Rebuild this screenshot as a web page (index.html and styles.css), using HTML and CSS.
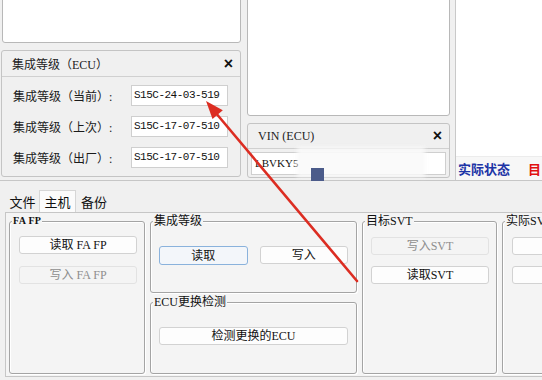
FILE: index.html
```html
<!DOCTYPE html>
<html lang="zh-CN">
<head>
<meta charset="utf-8">
<title>ECU</title>
<link rel="stylesheet" href="styles.css">
</head>
<body>
<div class="app">
  <div class="top">
    <div class="col col-left">
      <div class="pane pane-left"></div>
      <div class="panel ecu-panel">
        <div class="panel-head">
          <span class="title">集成等级（ECU）</span>
          <span class="close">×</span>
        </div>
        <div class="panel-body">
          <div class="row"><span class="lbl">集成等级（当前）:</span><span class="field">S15C-24-03-519</span></div>
          <div class="row"><span class="lbl">集成等级（上次）:</span><span class="field">S15C-17-07-510</span></div>
          <div class="row"><span class="lbl">集成等级（出厂）:</span><span class="field">S15C-17-07-510</span></div>
        </div>
      </div>
    </div>
    <div class="col col-mid">
      <div class="pane pane-mid"></div>
      <div class="panel vin-panel">
        <div class="panel-head vin-head">
          <span class="title vin-title">VIN (ECU)</span>
          <span class="close">×</span>
        </div>
        <div class="vin-body"><span class="field vin-field">LBVKY5</span></div>
      </div>
    </div>
    <div class="col col-right">
      <div class="pane pane-right"></div>
      <div class="status"><span class="st-blue">实际状态</span><span class="st-red">目</span></div>
    </div>
  </div>

  <div class="bottom">
    <div class="tabs">
      <span class="tab tab-1">文件</span>
      <span class="tab tab-2 active">主机</span>
      <span class="tab tab-3">备份</span>
    </div>
    <div class="tab-body">
      <div class="group g-fafp">
        <span class="legend legend-small">FA FP</span>
        <button class="btn">读取 FA FP</button>
        <button class="btn disabled">写入 FA FP</button>
      </div>
      <div class="col2">
        <div class="group g-level">
          <span class="legend">集成等级</span>
          <div class="btn-row">
            <button class="btn focus">读取</button>
            <button class="btn">写入</button>
          </div>
        </div>
        <div class="group g-ecu">
          <span class="legend">ECU更换检测</span>
          <button class="btn">检测更换的ECU</button>
        </div>
      </div>
      <div class="group g-svt">
        <span class="legend">目标SVT</span>
        <button class="btn disabled">写入SVT</button>
        <button class="btn">读取SVT</button>
      </div>
      <div class="group g-act">
        <span class="legend">实际SV</span>
        <button class="btn"></button>
        <button class="btn"></button>
      </div>
    </div>
  </div>

  <div class="redact"></div>
  <div class="bluesq"></div>
  <svg class="arrow" width="542" height="380" viewBox="0 0 542 380">
    <line x1="357" y1="281" x2="215" y2="112" stroke="#dc2d22" stroke-width="2.6" stroke-linecap="round"/>
    <polygon points="206,101 212.5,119 222.8,110.3" fill="#dc2d22"/>
  </svg>
</div>
</body>
</html>
```

FILE: styles.css
```css
* { box-sizing: border-box; }

body {
  margin: 0;
  width: 542px;
  height: 380px;
  overflow: hidden;
  background: #f0f0f0;
  font: 12px "Liberation Serif", "Noto Sans CJK SC", serif;
  color: #111;
}

.app {
  position: relative;
  width: 542px;
  height: 380px;
  overflow: hidden;
}

/* ---------- top area ---------- */
.top {
  display: flex;
  height: 181px;
  border-bottom: 1px solid #c6c6c6;
}

.col { display: flex; flex-direction: column; }

.col-left { width: 240px; margin-left: 1px; }
.col-mid { width: 203px; margin-left: 6px; }
.col-right {
  flex: 1;
  margin-left: 5px;
  border-left: 1px solid #c9c9c9;
  background: #fff;
}

.pane {
  background: #fff;
  border: 1px solid #b8b8b8;
  border-radius: 0 0 3px 3px;
  margin-top: -1px;
}
.pane-left { height: 44px; margin-left: 1px; }
.pane-mid { height: 117px; }
.pane-right {
  height: 158px;
  border: none;
  border-bottom: 1px solid #ececec;
  border-radius: 0;
}

.panel {
  margin-top: 7px;
  border: 1px solid #c4c4c4;
  border-radius: 3px;
  background: #f0f0f0;
}
.ecu-panel { height: 127px; }
.vin-panel { height: 55px; }

.panel-head {
  height: 26px;
  border-bottom: 1px solid #d0d0d0;
  display: flex;
  align-items: center;
  justify-content: space-between;
  padding: 0 7px 0 10px;
}
.title { font-size: 12px; color: #222; }
.close {
  font: bold 16px "Liberation Sans", sans-serif;
  color: #111;
  line-height: 1;
}

.panel-body {
  padding: 8px 0 0 11px;
  display: flex;
  flex-direction: column;
  gap: 10px;
}
.row { display: flex; align-items: center; height: 21px; }
.lbl { width: 118px; font-size: 12px; color: #1a1a1a; }

.field {
  display: block;
  width: 97px;
  height: 21px;
  background: #fff;
  border: 1px solid #cfcfcf;
  padding-left: 2px;
  font: 11px/19px "Liberation Mono", monospace;
  letter-spacing: -0.5px;
  color: #111;
}

.vin-head { height: 25px; }
.vin-title { font-size: 12px; }
.vin-body { padding: 3px 3px 0 3px; }
.vin-field { width: 195px; height: 23px; font: 11px/21px "Liberation Serif", serif; letter-spacing: 0; padding-left: 3px; }

.status {
  flex: 1;
  display: flex;
  align-items: center;
  padding-left: 2px;
  background: #f7f7f7;
  font: bold 13px "Noto Sans CJK SC", sans-serif;
}
.st-blue { color: #1d34a6; }
.st-red { color: #e01010; margin-left: 18px; }

/* ---------- bottom area ---------- */
.bottom { padding-top: 9px; }

.tabs {
  display: flex;
  height: 22px;
  margin-left: 6px;
}
.tab {
  display: flex;
  align-items: center;
  justify-content: center;
  font: 13px "Noto Sans CJK SC", sans-serif;
  color: #111;
}
.tab-1 { width: 33px; }
.tab-2 { width: 37px; }
.tab-3 { width: 36px; }
.tab.active {
  background: #fbfbfb;
  border: 1px solid #d6d6d6;
  border-bottom: none;
}

.tab-body {
  margin-left: 5px;
  width: 640px;
  height: 165px;
  border: 1px solid #c6c6c6;
  background: #f4f4f4;
  padding: 8px 3px 2px 3px;
  display: grid;
  grid-template-columns: 136px 207px 135px 160px;
  column-gap: 5px;
}

.group {
  border: 1px solid #a4a4a4;
  border-radius: 3px;
  box-shadow: inset 1px 1px 0 #fff, 1px 1px 0 #fff;
  display: flex;
  flex-direction: column;
  min-width: 0;
}

.legend {
  align-self: flex-start;
  margin: -8px 0 0 2px;
  padding: 0 1px;
  height: 14px;
  line-height: 14px;
  background: #f4f4f4;
  font-size: 12px;
  color: #111;
  white-space: nowrap;
}
.legend-small { font-size: 10px; font-weight: bold; letter-spacing: 0.3px; }

.btn {
  display: block;
  height: 18px;
  padding: 0;
  background: #fdfdfd;
  border: 1px solid #d2d2d2;
  border-radius: 3px;
  font: 12px/16px "Liberation Serif", "Noto Sans CJK SC", serif;
  color: #111;
  text-align: center;
}
.btn.disabled {
  background: #f4f4f4;
  border-color: #e2e2e2;
  color: #8e8e8e;
}
.btn.focus {
  background: #f3f6fa;
  border-color: #8ab2dc;
  height: 19px;
}

.g-fafp .btn { margin: 0 7px 0 9px; }
.g-fafp .btn:nth-of-type(1) { margin-top: 8px; }
.g-fafp .btn:nth-of-type(2) { margin-top: 12px; }

.col2 { display: flex; flex-direction: column; min-width: 0; }
.g-level { height: 72px; }
.g-ecu { flex: 1; margin-top: 9px; }

.btn-row {
  display: flex;
  gap: 12px;
  margin: 18px 8px 0 8px;
}
.btn-row .btn { flex: 1; }

.g-ecu .btn { margin: 18px 8px 0 8px; }

.g-svt .btn { margin: 0 7px 0 8px; }
.g-svt .btn:nth-of-type(1) { margin-top: 9px; }
.g-svt .btn:nth-of-type(2) { margin-top: 11px; }

.g-act .btn { margin: 0 7px 0 9px; }
.g-act .btn:nth-of-type(1) { margin-top: 9px; }
.g-act .btn:nth-of-type(2) { margin-top: 11px; }

/* ---------- overlays ---------- */
.redact {
  position: absolute;
  left: 297px;
  top: 147px;
  width: 128px;
  height: 30px;
  background: rgba(250, 250, 250, 0.92);
  filter: blur(2px);
}
.bluesq {
  position: absolute;
  left: 311px;
  top: 168px;
  width: 13px;
  height: 13px;
  background: #4b5b8a;
}
.arrow {
  position: absolute;
  left: 0;
  top: 0;
  pointer-events: none;
}
```
